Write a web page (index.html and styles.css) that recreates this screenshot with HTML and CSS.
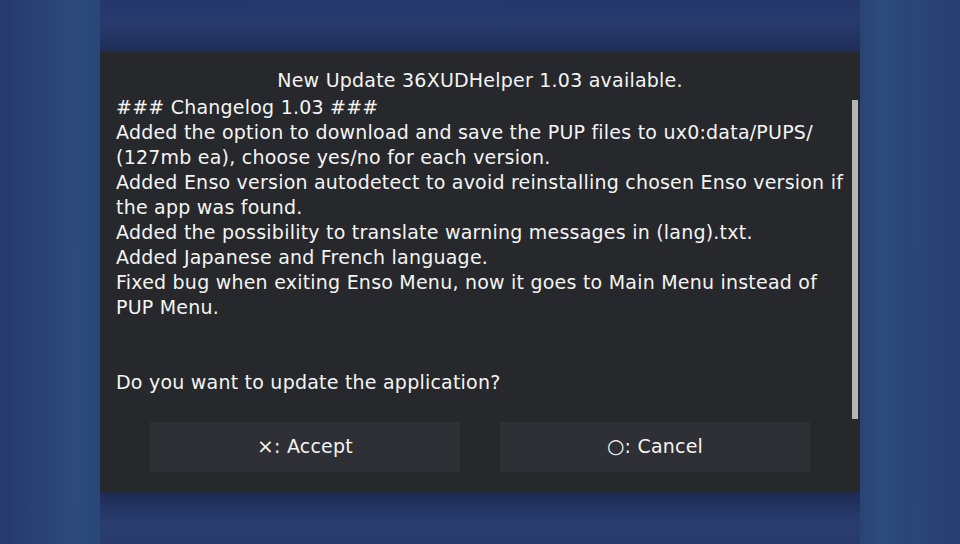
FILE: index.html
```html
<!DOCTYPE html>
<html>
<head>
<meta charset="utf-8">
<link rel="stylesheet" href="styles.css">
</head>
<body>
<div class="stage">
  <div class="column">
    <div class="band-top"></div>
    <div class="dialog">
      <div class="title">New Update 36XUDHelper 1.03 available.</div>
      <div class="content">
        <div class="text">### Changelog 1.03 ###
Added the option to download and save the PUP files to ux0:data/PUPS/
(127mb ea), choose yes/no for each version.
Added Enso version autodetect to avoid reinstalling chosen Enso version if
the app was found.
Added the possibility to translate warning messages in (lang).txt.
Added Japanese and French language.
Fixed bug when exiting Enso Menu, now it goes to Main Menu instead of
PUP Menu.


Do you want to update the application?</div>
        <div class="scrollbar"></div>
      </div>
      <div class="buttons">
        <div class="btn"><span class="sym">×</span>: Accept</div>
        <div class="btn"><span class="sym">○</span>: Cancel</div>
      </div>
    </div>
    <div class="band-bottom"></div>
  </div>
</div>
</body>
</html>
```
FILE: styles.css
```css
html, body {
  margin: 0;
  padding: 0;
  width: 960px;
  height: 544px;
  overflow: hidden;
}
body {
  font-family: "DejaVu Sans", "Liberation Sans", sans-serif;
  color: #f4f4f4;
  letter-spacing: 0.22px;
  background: linear-gradient(90deg, #263a6c 0%, #2c4a7c 8%, #2a4678 10.4%, #2a4474 89.6%, #2c4a7c 92%, #283e70 100%);
}
.stage {
  display: flex;
  justify-content: center;
  height: 544px;
}
.column {
  width: 760px;
  display: flex;
  flex-direction: column;
}
.band-top {
  height: 52px;
  background: linear-gradient(180deg, #24366a 0%, #283b6e 40%, #22325f 80%, #1e2c55 100%);
}
.band-bottom {
  height: 52px;
  background: linear-gradient(180deg, #1f2a48 0%, #1f2d58 8%, #253767 40%, #293d6e 60%, #283b6c 100%);
}
.dialog {
  height: 440px;
  box-sizing: border-box;
  background: #26282c;
  padding: 16px 50px 20px 50px;
  display: flex;
  flex-direction: column;
}
.title {
  text-align: center;
  font-size: 19px;
  line-height: 25px;
  height: 27px;
}
.content {
  position: relative;
  margin: 0 -50px 0 -34px;
  height: 327px;
}
.text {
  white-space: pre;
  font-size: 19px;
  line-height: 25px;
}
.scrollbar {
  position: absolute;
  right: 2px;
  top: 5px;
  width: 6px;
  height: 319px;
  background: #b4b4b4;
}
.buttons {
  display: flex;
  gap: 40px;
  height: 50px;
}
.btn {
  flex: 1;
  background: #2e3035;
  display: flex;
  align-items: center;
  justify-content: center;
  font-size: 19px;
  padding-bottom: 3px;
}
.sym {
  font-size: 20px;
}
```
